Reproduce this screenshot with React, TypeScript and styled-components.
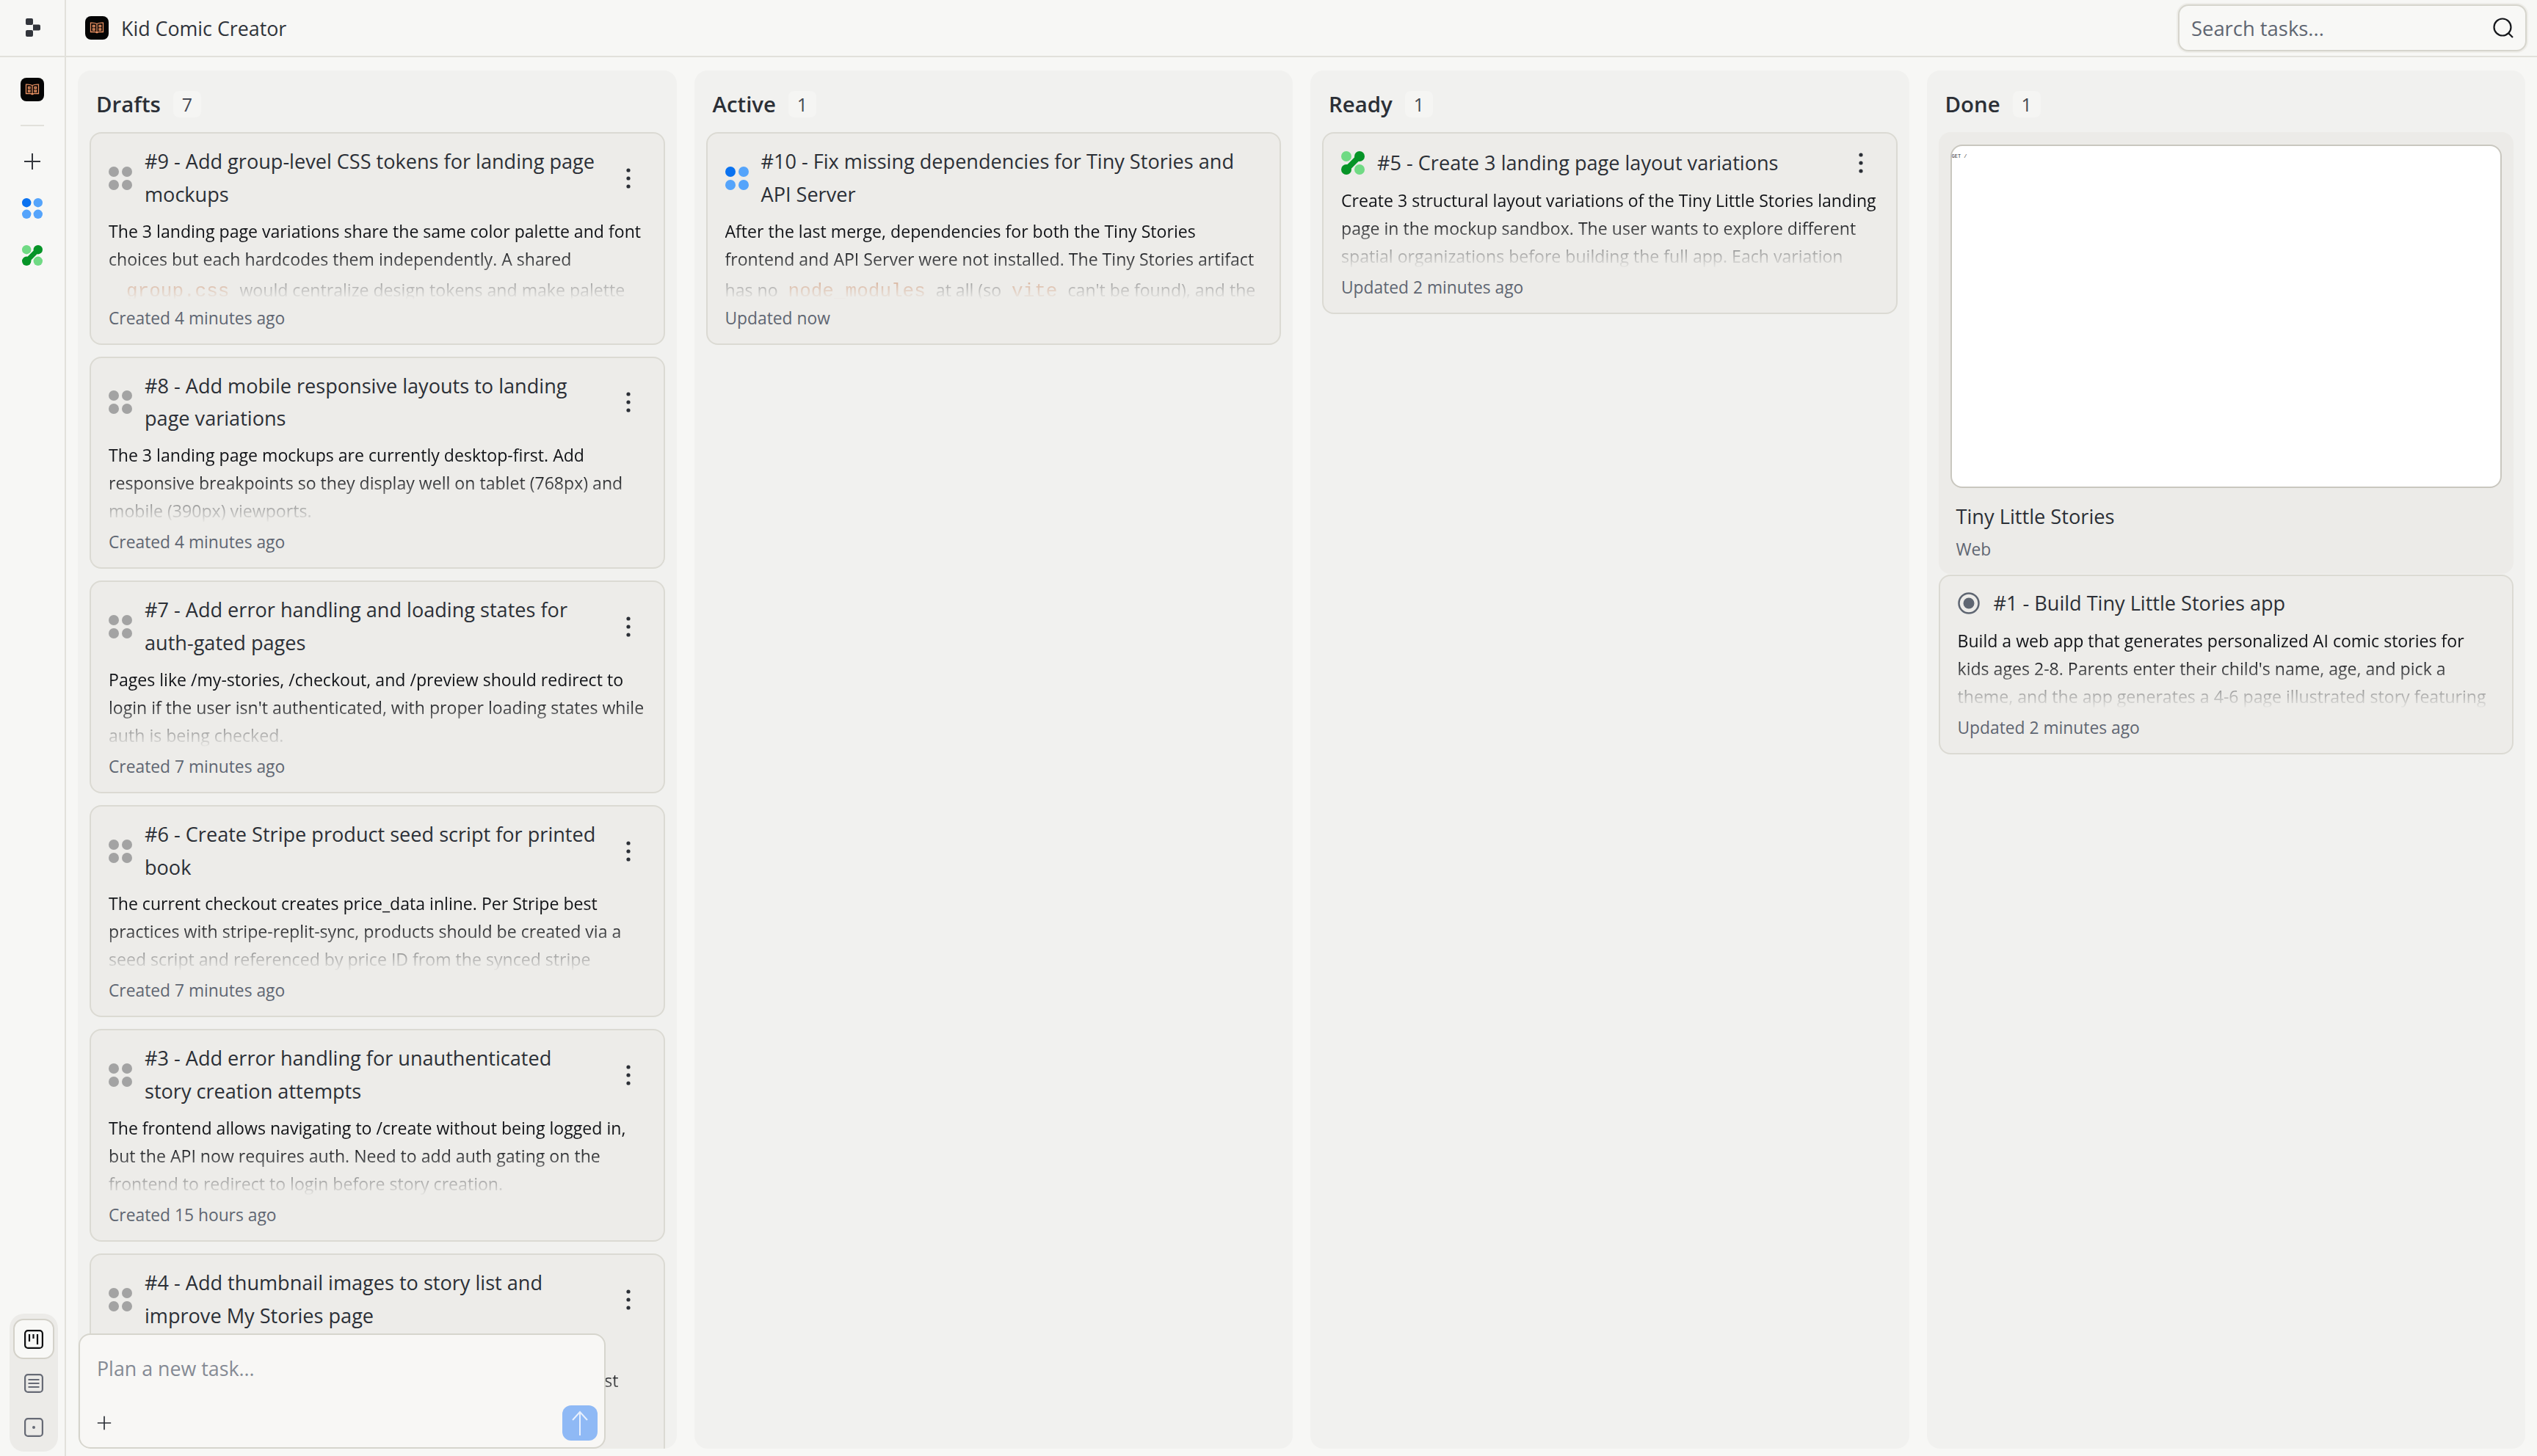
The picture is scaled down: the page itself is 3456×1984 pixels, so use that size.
import React from "react";
import styled, { createGlobalStyle } from "styled-components";

const UI = `"Open Sans", "Noto Sans", sans-serif`;
const MONO = `"Liberation Mono", monospace`;

const Global = createGlobalStyle`
  html, body { margin: 0; padding: 0; background: #f7f7f5; }
  * { box-sizing: border-box; }
`;

const Shell = styled.div`
  display: flex; width: 3456px; height: 1984px; overflow: hidden;
  font-family: ${UI}; background: #f7f7f5; color: #2b2f36;
`;
const Rail = styled.aside`
  width: 90px; flex: none; display: flex; flex-direction: column; border-right: 2px solid #e2e1db;
`;
const RailTop = styled.div`
  height: 78px; flex: none; border-bottom: 2px solid #e2e1db; display: flex; align-items: center; justify-content: center;
`;
const RailBody = styled.div`
  flex: 1; display: flex; flex-direction: column; align-items: center; padding-top: 28px;
`;
const RailDivider = styled.div`
  width: 32px; height: 2px; background: #e2e1db; margin: 32px 0 24px;
`;
const RailButton = styled.div`
  width: 48px; height: 48px; display: flex; align-items: center; justify-content: center; margin-bottom: 16px;
`;
const Tabs = styled.div`
  margin-top: auto; margin-bottom: 6px; align-self: flex-start; margin-left: 13px;
  width: 66px; height: 188px; padding: 7px 5px; border-radius: 20px; background: #ecebe8;
  display: flex; flex-direction: column;
`;
const Tab = styled.div<{ $active?: boolean }>`
  width: 56px; height: 55px; flex: none; margin-bottom: 5px; border-radius: 14px;
  display: flex; align-items: center; justify-content: center;
  background: ${(p) => (p.$active ? "#f8f8f6" : "transparent")};
  border: 2px solid ${(p) => (p.$active ? "#d3d1c9" : "transparent")};
`;
const Main = styled.div`
  flex: 1; min-width: 0; display: flex; flex-direction: column;
`;
const TopBar = styled.header`
  height: 78px; flex: none; border-bottom: 2px solid #e2e1db; display: flex; align-items: center;
  padding: 0 14px 0 26px;
`;
const ProjectName = styled.div`
  margin-left: 17px; font-size: 26.8px; color: #2f333a;
`;
const Search = styled.div`
  margin-left: auto; width: 475px; height: 64px; border-radius: 14px; background: #f8f8f6;
  border: 2px solid #d6d5cd; box-shadow: 0 0 0 2px #eeede9;
  display: flex; align-items: center; justify-content: space-between; padding: 0 16px;
  font-size: 27.4px; color: #5f6672;
`;
const Board = styled.main`
  flex: 1; min-height: 0; display: grid; grid-template-columns: repeat(4, 1fr); gap: 24px; padding: 18px 16px 10px;
`;
const Column = styled.section`
  position: relative; min-width: 0; overflow: hidden; border-radius: 18px; background: #f1f1ef;
  display: flex; flex-direction: column;
`;
const ColumnHead = styled.div`
  height: 84px; flex: none; display: flex; align-items: center; padding: 8px 0 0 25px;
`;
const ColumnTitle = styled.h2`
  margin: 0; font-size: 29.4px; font-weight: 600; color: #2b2f36;
`;
const Count = styled.span`
  margin-left: 17px; width: 38px; height: 36px; border-radius: 8px; background: #f5f5f3;
  display: flex; align-items: center; justify-content: center; font-size: 25px; color: #444852;
`;
const ColumnBody = styled.div`
  display: flex; flex-direction: column; gap: 16px; padding: 0 16px;
`;
const DoneStack = styled.div`
  display: flex; flex-direction: column; gap: 1px;
`;
const Card = styled.article<{ $tight?: boolean }>`
  flex: none; border: 2px solid #dbdad3; border-radius: 16px; background: #edecE9;
  padding: ${(p) => (p.$tight ? "13px" : "16px")} 24px 16px;
`;
const CardHead = styled.div`
  display: flex; align-items: center; gap: 17px; min-height: 48px;
`;
const StatusIcon = styled.span`
  flex: none; display: flex;
`;
const CardTitle = styled.h3`
  flex: 1; min-width: 0; margin: 0; font-size: 27.1px; line-height: 44.8px; font-weight: 400; color: #2b2f36;
`;
const TextLine = styled.span`
  display: block; white-space: nowrap;
`;
const Kebab = styled.span`
  flex: none; width: 48px; height: 48px; display: flex; align-items: center; justify-content: center;
`;
const CardBody = styled.div`
  margin-top: 8px; height: 112px; overflow: hidden; font-size: 23.1px; line-height: 38px; color: #111317;
  -webkit-mask-image: linear-gradient(to bottom, #000 40%, transparent 100%);
  mask-image: linear-gradient(to bottom, #000 40%, transparent 100%);
`;
const Code = styled.code<{ $lead?: boolean }>`
  font-family: ${MONO}; font-size: 26px; line-height: 50px; color: #b8571f; padding: 0 8px;
  margin-left: ${(p) => (p.$lead ? "16px" : "0")};
`;
const Meta = styled.div`
  margin-top: 8px; height: 36px; line-height: 36px; font-size: 22.8px; color: #5f6672;
`;
const PreviewCard = styled.div`
  border-radius: 16px; background: #ecebe8; padding: 17px 16px 15px;
`;
const PreviewFrame = styled.div`
  height: 468px; background: #fff; border: 2px solid #c9c7bf; border-radius: 16px; overflow: hidden;
  font-family: ${MONO}; font-size: 7px; line-height: 12px; color: #333; padding: 8px 0 0 0;
`;
const PreviewTitle = styled.div`
  margin: 17px 8px 0; font-size: 27.2px; line-height: 44px; color: #2b2f36;
`;
const PreviewKind = styled.div`
  margin: 5px 8px 0; font-size: 22.8px; line-height: 36px; color: #5f6672;
`;
const Composer = styled.div`
  position: absolute; left: 1px; bottom: 0; width: 718px; height: 157px; background: #f8f7f5;
  border: 2px solid #d6d5cd; border-radius: 16px; display: flex; flex-direction: column; justify-content: space-between;
  padding: 26px 9px 9px 23px;
`;
const Placeholder = styled.div`
  font-size: 26.8px; line-height: 40px; color: #858a94;
`;
const ComposerRow = styled.div`
  display: flex; align-items: center; justify-content: space-between;
`;
const SendButton = styled.div`
  width: 48px; height: 48px; border-radius: 12px; background: #8fb9f5; display: flex; align-items: center; justify-content: center;
`;

const Replit = () => (
  <svg width="22" height="26" viewBox="0 0 22 26" fill="#32353b">
    <rect x="2" y="0" width="10" height="9" rx="2" />
    <path d="M12 8.5h8a2 2 0 0 1 2 2v4a2 2 0 0 1-2 2h-8z" />
    <rect x="2" y="16" width="10" height="9" rx="2" />
  </svg>
);
const BookLogo = () => (
  <svg width="32" height="32" viewBox="0 0 32 32">
    <rect width="32" height="32" rx="8" fill="#050505" />
    <g fill="none" stroke="#ea9162" strokeWidth="1.3">
      <path d="M16 10.5c-1.8-1.2-5-1.6-8.5-1.4v12.4h6l2.5 1.2 2.5-1.2h6V9.100c-3.500-.2-6.700.2-8.500 1.400zM16 10.500v13" />
      <path d="M10.500 12.500h2.500v2.200h-2.500zM10.500 16.800h2.500V19h-2.500zM19 12.500h2.500v2.200H19zM19 16.800h2.500V19H19z" />
    </g>
  </svg>
);
const Dots = ({ size, r, a, b }: { size: number; r: number; a: string; b: string }) => {
  const lo = r;
  const hi = size - r;
  return (
    <svg width={size} height={size} viewBox={`0 0 ${size} ${size}`}>
      <circle cx={lo} cy={lo} r={r} fill={a} />
      <circle cx={hi} cy={lo} r={r} fill={b} />
      <circle cx={lo} cy={hi} r={r} fill={b} />
      <circle cx={hi} cy={hi} r={r} fill={b} />
    </svg>
  );
};
const Linked = ({ size, r }: { size: number; r: number }) => {
  const lo = r;
  const hi = size - r;
  return (
    <svg width={size} height={size} viewBox={`0 0 ${size} ${size}`}>
      <circle cx={lo} cy={lo} r={r} fill="#70da84" />
      <circle cx={hi} cy={hi} r={r} fill="#70da84" />
      <path d={`M${hi} ${lo}L${lo} ${hi}`} stroke="#069427" strokeWidth={r * 1.1} />
      <circle cx={hi} cy={lo} r={r} fill="#069427" />
      <circle cx={lo} cy={hi} r={r} fill="#069427" />
    </svg>
  );
};
const Radio = () => (
  <svg width="32" height="30" viewBox="0 0 32 30">
    <circle cx="15" cy="15" r="13.500" fill="none" stroke="#5f6672" strokeWidth="2.500" />
    <circle cx="15" cy="15" r="7.500" fill="#5f6672" />
  </svg>
);
const More = () => (
  <svg width="6" height="30" viewBox="0 0 6 30" fill="#2b2f36">
    <circle cx="3" cy="4" r="2.600" />
    <circle cx="3" cy="15" r="2.600" />
    <circle cx="3" cy="26" r="2.600" />
  </svg>
);
const PlusGlyph = ({ size, stroke }: { size: number; stroke: string }) => (
  <svg width={size} height={size} viewBox="0 0 24 24" fill="none" stroke={stroke} strokeWidth="2">
    <path d="M12 1v22M1 12h22" />
  </svg>
);
const SearchGlyph = () => (
  <svg width="28" height="28" viewBox="0 0 28 28" fill="none" stroke="#16181c" strokeWidth="2.200">
    <circle cx="13" cy="13" r="11.500" />
    <path d="M21 21l6 6" />
  </svg>
);
const BoardGlyph = () => (
  <svg width="26" height="26" viewBox="0 0 26 26" fill="none" stroke="#0d0e10" strokeWidth="2.200">
    <rect x="1.100" y="1.100" width="23.800" height="23.800" rx="4" />
    <path d="M7 6v10M12.500 6v6M18 6v14" />
  </svg>
);
const ListGlyph = () => (
  <svg width="26" height="26" viewBox="0 0 26 26" fill="none" stroke="#666a75" strokeWidth="2.200">
    <rect x="1.100" y="1.100" width="23.800" height="23.800" rx="4" />
    <path d="M5.500 8h15M5.500 13h15M5.500 18h15" />
  </svg>
);
const PointGlyph = () => (
  <svg width="26" height="26" viewBox="0 0 26 26" fill="none" stroke="#666a75" strokeWidth="2.200">
    <rect x="1.100" y="1.100" width="23.800" height="23.800" rx="4" />
    <circle cx="13" cy="13" r="2" fill="#666a75" stroke="none" />
  </svg>
);
const ArrowGlyph = () => (
  <svg width="24" height="36" viewBox="0 0 24 36" fill="none" stroke="#e8f0fd" strokeWidth="2">
    <path d="M2 14L12 3l10 11M12 3v32" />
  </svg>
);

type Task = { icon: React.ReactNode; title: string[]; body: React.ReactNode[]; meta: string; more?: boolean; tight?: boolean };
const gray = <Dots size={32} r={7} a="#a3a3a3" b="#a3a3a3" />;
const blue = <Dots size={32} r={7} a="#0a72f0" b="#55a4fb" />;

const drafts: Task[] = [
  { icon: gray, more: true, meta: "Created 4 minutes ago",
    title: ["#9 - Add group-level CSS tokens for landing page", "mockups"],
    body: ["The 3 landing page variations share the same color palette and font", "choices but each hardcodes them independently. A shared", <><Code $lead>group.css</Code> would centralize design tokens and make palette</>] },
  { icon: gray, more: true, meta: "Created 4 minutes ago",
    title: ["#8 - Add mobile responsive layouts to landing", "page variations"],
    body: ["The 3 landing page mockups are currently desktop-first. Add", "responsive breakpoints so they display well on tablet (768px) and", "mobile (390px) viewports."] },
  { icon: gray, more: true, meta: "Created 7 minutes ago",
    title: ["#7 - Add error handling and loading states for", "auth-gated pages"],
    body: ["Pages like /my-stories, /checkout, and /preview should redirect to", "login if the user isn't authenticated, with proper loading states while", "auth is being checked."] },
  { icon: gray, more: true, meta: "Created 7 minutes ago",
    title: ["#6 - Create Stripe product seed script for printed", "book"],
    body: ["The current checkout creates price_data inline. Per Stripe best", "practices with stripe-replit-sync, products should be created via a", "seed script and referenced by price ID from the synced stripe"] },
  { icon: gray, more: true, meta: "Created 15 hours ago",
    title: ["#3 - Add error handling for unauthenticated", "story creation attempts"],
    body: ["The frontend allows navigating to /create without being logged in,", "but the API now requires auth. Need to add auth gating on the", "frontend to redirect to login before story creation."] },
  { icon: gray, more: true, meta: "Created 15 hours ago",
    title: ["#4 - Add thumbnail images to story list and", "improve My Stories page"],
    body: ["My Stories only shows titles and dates today. Show a cover", "Add a cover thumbnail for each story so parents can scan the list", "more easily."] },
];
const active: Task = { icon: blue, meta: "Updated now",
  title: ["#10 - Fix missing dependencies for Tiny Stories and", "API Server"],
  body: ["After the last merge, dependencies for both the Tiny Stories", "frontend and API Server were not installed. The Tiny Stories artifact", <>has no <Code>node_modules</Code> at all (so <Code>vite</Code> can't be found), and the</>] };
const ready: Task = { icon: <Linked size={32} r={7} />, more: true, meta: "Updated 2 minutes ago",
  title: ["#5 - Create 3 landing page layout variations"],
  body: ["Create 3 structural layout variations of the Tiny Little Stories landing", "page in the mockup sandbox. The user wants to explore different", "spatial organizations before building the full app. Each variation"] };
const done: Task = { icon: <Radio />, tight: true, meta: "Updated 2 minutes ago",
  title: ["#1 - Build Tiny Little Stories app"],
  body: ["Build a web app that generates personalized AI comic stories for", "kids ages 2-8. Parents enter their child's name, age, and pick a", "theme, and the app generates a 4-6 page illustrated story featuring"] };

const TaskCard = ({ task }: { task: Task }) => (
  <Card $tight={task.tight}>
    <CardHead>
      <StatusIcon>{task.icon}</StatusIcon>
      <CardTitle>{task.title.map((t) => <TextLine key={t}>{t}</TextLine>)}</CardTitle>
      {task.more && <Kebab><More /></Kebab>}
    </CardHead>
    <CardBody>{task.body.map((l, i) => <TextLine key={i}>{l}</TextLine>)}</CardBody>
    <Meta>{task.meta}</Meta>
  </Card>
);

const Head = ({ name, n }: { name: string; n: number }) => (
  <ColumnHead><ColumnTitle>{name}</ColumnTitle><Count>{n}</Count></ColumnHead>
);

export default function App() {
  return (
    <Shell>
      <Global />
      <Rail>
        <RailTop><Replit /></RailTop>
        <RailBody>
          <BookLogo />
          <RailDivider />
          <RailButton><PlusGlyph size={24} stroke="#34373d" /></RailButton>
          <RailButton><Dots size={28} r={6.200} a="#0a72f0" b="#55a4fb" /></RailButton>
          <RailButton><Linked size={28} r={6.200} /></RailButton>
          <Tabs>
            <Tab $active><BoardGlyph /></Tab>
            <Tab><ListGlyph /></Tab>
            <Tab><PointGlyph /></Tab>
          </Tabs>
        </RailBody>
      </Rail>
      <Main>
        <TopBar>
          <BookLogo />
          <ProjectName>Kid Comic Creator</ProjectName>
          <Search>Search tasks...<SearchGlyph /></Search>
        </TopBar>
        <Board>
          <Column>
            <Head name="Drafts" n={7} />
            <ColumnBody>{drafts.map((t) => <TaskCard key={t.title[0]} task={t} />)}</ColumnBody>
            <Composer>
              <Placeholder>Plan a new task...</Placeholder>
              <ComposerRow>
                <PlusGlyph size={20} stroke="#2b2f36" />
                <SendButton><ArrowGlyph /></SendButton>
              </ComposerRow>
            </Composer>
          </Column>
          <Column>
            <Head name="Active" n={1} />
            <ColumnBody><TaskCard task={active} /></ColumnBody>
          </Column>
          <Column>
            <Head name="Ready" n={1} />
            <ColumnBody><TaskCard task={ready} /></ColumnBody>
          </Column>
          <Column>
            <Head name="Done" n={1} />
            <ColumnBody>
              <DoneStack>
                <PreviewCard>
                  <PreviewFrame>GET /</PreviewFrame>
                  <PreviewTitle>Tiny Little Stories</PreviewTitle>
                  <PreviewKind>Web</PreviewKind>
                </PreviewCard>
                <TaskCard task={done} />
              </DoneStack>
            </ColumnBody>
          </Column>
        </Board>
      </Main>
    </Shell>
  );
}
